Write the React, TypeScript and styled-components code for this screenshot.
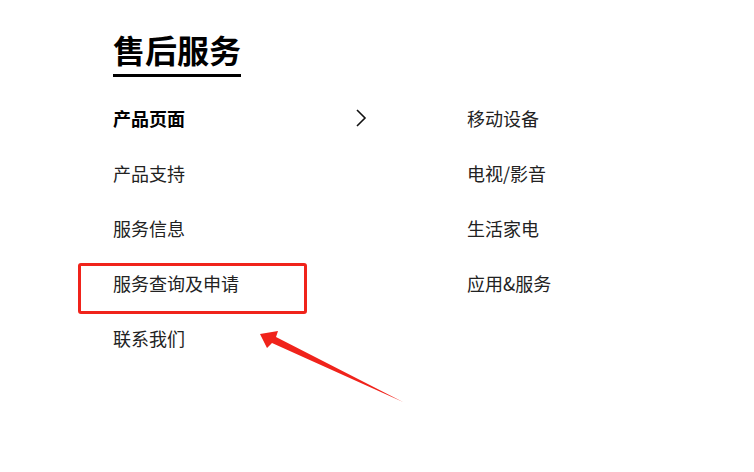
import * as React from "react";
import styled, { createGlobalStyle } from "styled-components";

const GlobalStyle = createGlobalStyle`
  html, body {
    margin: 0;
    padding: 0;
    background: #fff;
  }
  body {
    font-family: "Noto Sans CJK SC", "Noto Sans", sans-serif;
    color: #222;
  }
`;

const Page = styled.div`
  position: relative;
  width: 754px;
  height: 472px;
  overflow: hidden;
  padding: 29px 0 0 113px;
  box-sizing: border-box;
`;

const Title = styled.h2`
  display: inline-block;
  margin: 0;
  font-size: 32px;
  line-height: 40px;
  font-weight: 700;
  color: #000;
  padding-bottom: 5px;
  border-bottom: 3px solid #000;
`;

const Columns = styled.div`
  display: grid;
  grid-template-columns: 354px 200px;
  margin-top: 13px;
`;

const List = styled.ul`
  list-style: none;
  margin: 0;
  padding: 0;
`;

const Item = styled.li<{ $active?: boolean; $marked?: boolean }>`
  position: relative;
  display: flex;
  align-items: center;
  justify-content: space-between;
  width: 255px;
  height: 55px;
  font-size: 18px;
  font-weight: ${(p) => (p.$active ? 700 : 400)};
  color: ${(p) => (p.$active ? "#000" : "#222")};

  ${(p) =>
    p.$marked &&
    `
    &::after {
      content: "";
      position: absolute;
      left: -35px;
      top: 8px;
      width: 229px;
      height: 51px;
      box-sizing: border-box;
      border: 3px solid #f0231b;
      border-radius: 3px;
    }
  `}
`;

const Chevron = () => (
  <svg width="14" height="20" viewBox="0 0 14 20">
    <path d="M3 2 L11 10 L3 18" fill="none" stroke="#111" strokeWidth="1.6" />
  </svg>
);

const Arrow = styled.svg`
  position: absolute;
  left: 0;
  top: 0;
  pointer-events: none;
`;

const left = ["产品页面", "产品支持", "服务信息", "服务查询及申请", "联系我们"];
const right = ["移动设备", "电视/影音", "生活家电", "应用&服务"];

export default function App() {
  return (
    <>
      <GlobalStyle />
      <Page>
        <Title>售后服务</Title>
        <Columns>
          <List>
            {left.map((t, i) => (
              <Item key={t} $active={i === 0} $marked={i === 3}>
                <span>{t}</span>
                {i === 0 && <Chevron />}
              </Item>
            ))}
          </List>
          <List>
            {right.map((t) => (
              <Item key={t}>{t}</Item>
            ))}
          </List>
        </Columns>
        <Arrow width="754" height="472" viewBox="0 0 754 472">
          <polygon
            points="260,334 278,331 276,337 403,402 272,343 267,348"
            fill="#f0231b"
          />
        </Arrow>
      </Page>
    </>
  );
}
